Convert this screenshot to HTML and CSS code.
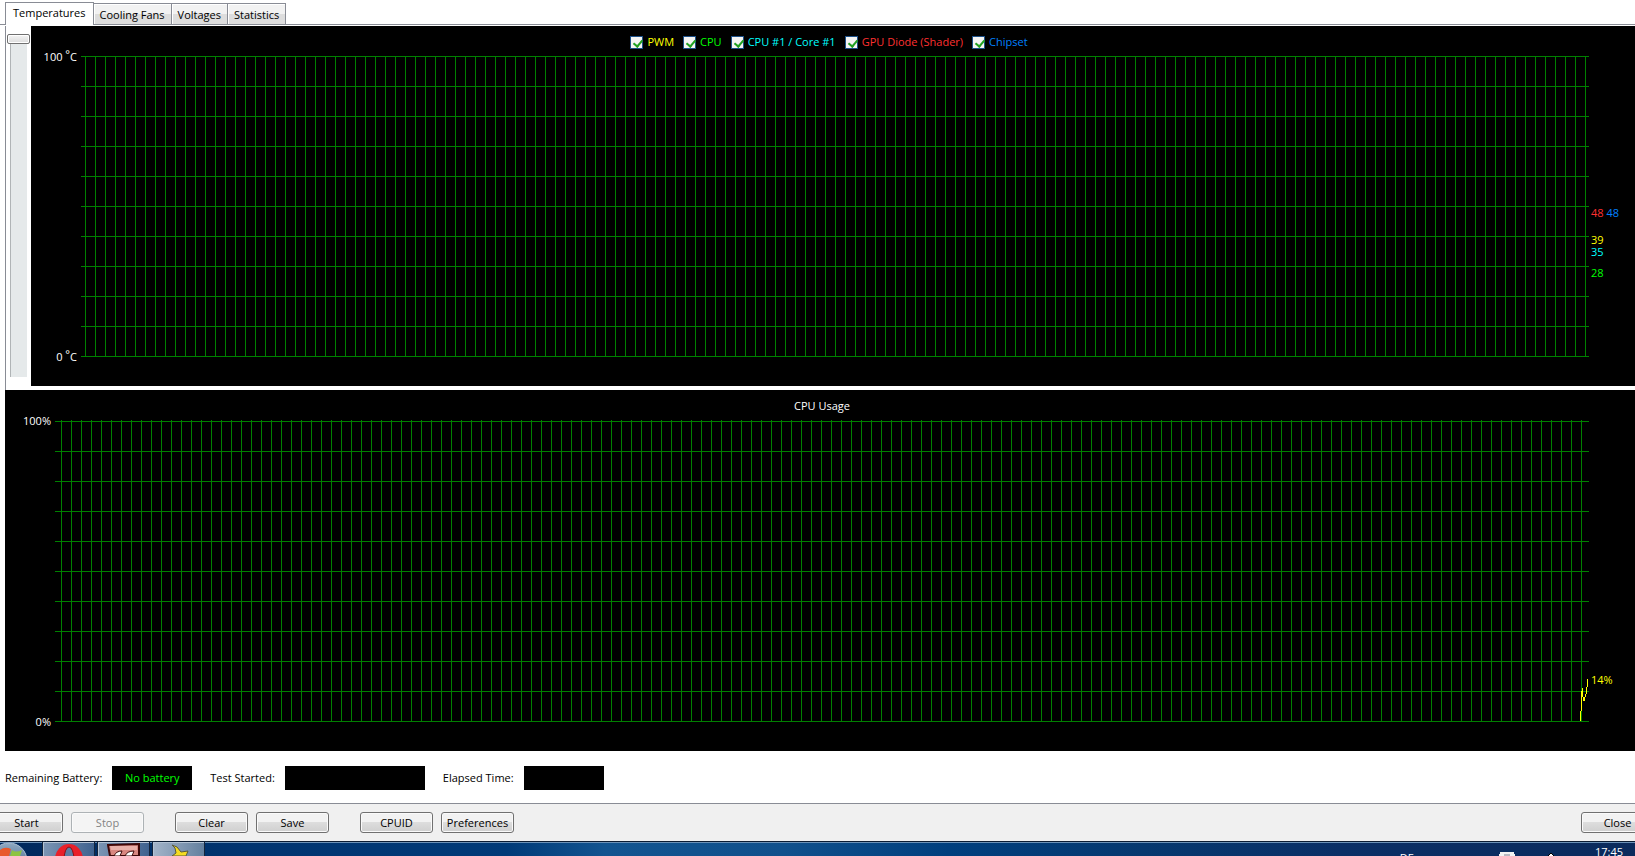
FILE: index.html
```
<!DOCTYPE html>
<html lang="en">
<head>
  <meta charset="UTF-8" />
  <meta name="viewport" content="width=device-width, initial-scale=1" />
  <title>System Stability Test</title>
  <link rel="stylesheet" href="styles.css">
</head>
<body>
  <nav class="tabs">
    <button class="tab active">Temperatures</button>
    <button class="tab">Cooling Fans</button>
    <button class="tab">Voltages</button>
    <button class="tab">Statistics</button>
  </nav>

  <main class="panel">
    <div class="temp-row">
      <div class="slider-box">
        <input type="range" class="slider" min="0" max="100" value="100" aria-label="Scale">
      </div>
      <section class="chart temp-chart">
        <div class="legend">
          <label class="yellow"><input type="checkbox" checked>PWM</label>
          <label class="green"><input type="checkbox" checked>CPU</label>
          <label class="cyan"><input type="checkbox" checked>CPU #1 / Core #1</label>
          <label class="red"><input type="checkbox" checked>GPU Diode (Shader)</label>
          <label class="blue"><input type="checkbox" checked>Chipset</label>
        </div>
        <div class="plot">
          <div class="scale">
            <span>100 <span class="deg">°</span>C</span>
            <span>0 <span class="deg">°</span>C</span>
          </div>
          <div class="grid"></div>
          <div class="values">
            <span class="value" style="bottom: 48%"><span class="red">48</span> <span class="blue">48</span></span>
            <span class="value yellow" style="bottom: 39%">39</span>
            <span class="value cyan" style="bottom: 35%">35</span>
            <span class="value green" style="bottom: 28%">28</span>
          </div>
        </div>
      </section>
    </div>

    <section class="chart cpu-chart">
      <h2 class="chart-title">CPU Usage</h2>
      <div class="plot">
        <div class="scale">
          <span>100%</span>
          <span>0%</span>
        </div>
        <div class="grid">
          <svg class="usage-line" width="10" height="301" viewBox="0 0 10 301" shape-rendering="crispEdges">
            <path d="M1 300 V292 L2 290 V272 L3 270 V267 L4 276 L5 280 L6 276 L7 273 L8 266 L9 258" fill="none" stroke="#ffff00" />
          </svg>
        </div>
        <div class="values">
          <span class="value yellow" style="bottom: 14%">14%</span>
        </div>
      </div>
    </section>

    <div class="status">
      <span>Remaining Battery:</span>
      <output class="field green">No battery</output>
      <span>Test Started:</span>
      <output class="field wide"></output>
      <span>Elapsed Time:</span>
      <output class="field"></output>
    </div>
  </main>

  <div class="actions">
    <div class="group">
      <button class="btn">Start</button>
      <button class="btn" disabled>Stop</button>
    </div>
    <div class="group">
      <button class="btn">Clear</button>
      <button class="btn">Save</button>
    </div>
    <div class="group">
      <button class="btn">CPUID</button>
      <button class="btn">Preferences</button>
    </div>
    <button class="btn close">Close</button>
  </div>

  <footer class="taskbar">
    <button class="orb" aria-label="Start menu">
      <svg width="42" height="14" viewBox="0 0 42 14">
        <defs>
          <linearGradient id="orb" x1="0" y1="0" x2="0" y2="1">
            <stop offset="0" stop-color="#8fa9c2" />
            <stop offset="1" stop-color="#2d5278" />
          </linearGradient>
        </defs>
        <circle cx="9" cy="19" r="18" fill="url(#orb)" stroke="#a9bdd0" />
        <path d="M0 8 Q5 4 11 7 L9 14 H0 Z" fill="#e8592b" />
        <path d="M12 8 Q16 11 22 8 L20 14 H10 Z" fill="#8cc43f" />
      </svg>
    </button>
    <button class="task" aria-label="Opera">
      <svg width="30" height="14" viewBox="0 0 30 14">
        <ellipse cx="15" cy="17" rx="14" ry="15" fill="#e8202a" />
        <ellipse cx="15" cy="18" rx="5" ry="13" fill="#5c7da3" stroke="#8d0d14" />
      </svg>
    </button>
    <button class="task" aria-label="Monitor">
      <svg width="34" height="14" viewBox="0 0 34 14">
        <path d="M1 3 L32 2 V14 H3 Z" fill="#d98780" stroke="#3c0808" stroke-width="2" />
        <path d="M3 4 H30 V8 H4 Z" fill="#e9b0a9" />
        <path d="M7 14 Q9 9 15 9 L13 14 Z M18 14 Q20 9 27 9 L25 14 Z" fill="#fff" stroke="#3c0808" />
      </svg>
    </button>
    <button class="task light" aria-label="Stability test">
      <svg width="28" height="14" viewBox="0 0 28 14">
        <path d="M7 3 L12 5 L16 10 L23 9 L21 14 H7 L11 11 L10 6 Z" fill="#f5dc22" stroke="#5a5a3c" />
      </svg>
    </button>
    <div class="tray">
      <span class="lang">DE</span>
      <svg class="flag" width="16" height="6" viewBox="0 0 16 6">
        <path d="M0 3 H1 V1 H15 V3 H16 V6 H0 Z" fill="#f2f2f2" />
        <path d="M5 3 H11 V6 H5 Z" fill="#b7b7c0" />
      </svg>
      <svg class="sound" width="8" height="6" viewBox="0 0 8 6">
        <path d="M4 2 L7 5 V6 H1 V5 Z" fill="#fff" stroke="#000" />
      </svg>
      <span class="clock">17:45</span>
    </div>
  </footer>
</body>
</html>
```
FILE: styles.css
```
* {
  box-sizing: border-box;
}

html {
  height: 100%;
}

body {
  margin: 0;
  min-height: 100%;
  display: flex;
  flex-direction: column;
  overflow: hidden;
  background: #fff;
  color: #000;
  font-family: "Open Sans", "Noto Sans", sans-serif;
  font-size: 11px;
  line-height: 16px;
}

button {
  font: inherit;
  color: inherit;
}

.yellow { color: #ffff00; }
.green { color: #00ff00; }
.cyan { color: #00ffff; }
.red { color: #ff3030; }
.blue { color: #0080ff; }

/* Tabs */
.tabs {
  display: flex;
  align-items: flex-end;
  height: 25px;
  padding-left: 5px;
  border-bottom: 1px solid #898c95;
}

.tab {
  height: 21px;
  padding: 1px 6px 0;
  border: 1px solid #898c95;
  border-left-width: 0;
  border-bottom: 0;
  background: linear-gradient(#f2f2f2 0 50%, #dddddd 50% 100%);
  box-shadow: inset 1px 1px 0 #fff;
}

.tab.active {
  height: 23px;
  margin-bottom: -1px;
  padding: 0 7px 2px;
  border-left-width: 1px;
  background: #fff;
}

/* Charts */
.panel {
  display: flex;
  flex-direction: column;
  gap: 4px;
  padding: 1px 0 13px;
  margin-left: 5px;
}

.temp-row {
  display: flex;
  border-left: 1px solid #898c95;
  margin-bottom: -4px;
  padding-bottom: 4px;
}

.slider-box {
  display: flex;
  justify-content: center;
  width: 25px;
  padding: 8px 0 9px;
}

.slider {
  appearance: none;
  writing-mode: vertical-lr;
  direction: rtl;
  width: 23px;
  margin: 0;
  background: linear-gradient(90deg, transparent 3px, #b0b4b6 3px 4px, #e5e9ea 4px 20px, transparent 20px);
}

.slider::-webkit-slider-thumb {
  appearance: none;
  width: 23px;
  height: 10px;
  border: 1px solid #707070;
  border-radius: 2px;
  background: linear-gradient(#f4f4f4, #dcdcdc);
  box-shadow: inset 0 0 0 1px #fff;
}

.chart {
  flex: 1;
  background: #000;
  color: #fff;
}

.temp-chart {
  padding: 8px 0 29px;
}

.cpu-chart {
  padding: 8px 0 29px;
}

.legend {
  display: flex;
  justify-content: center;
  gap: 9px;
  height: 16px;
  margin: 0 8px 6px 0;
}

.legend label {
  display: flex;
  align-items: center;
  gap: 4px;
}

.legend input {
  appearance: none;
  width: 13px;
  height: 13px;
  margin: 0;
  border: 1px solid #1d5088;
  background: #f4f4f4;
}

.legend input:checked::before {
  content: "";
  display: block;
  width: 4px;
  height: 7px;
  margin: 1px 0 0 4px;
  border: solid #21a121;
  border-width: 0 2px 2px 0;
  transform: rotate(40deg);
}

.chart-title {
  margin: 0 0 6px;
  padding-left: 4px;
  text-align: center;
  font-size: 11px;
  font-weight: normal;
}

.plot {
  display: flex;
}

.scale {
  display: flex;
  flex-direction: column;
  justify-content: space-between;
  width: 50px;
  margin: -7px 0 -8px;
  padding-right: 4px;
  text-align: right;
}

.deg {
  position: relative;
  top: -3px;
}

.grid {
  flex: 1;
  height: 301px;
  background-image:
    linear-gradient(90deg, #008000 1px, transparent 1px),
    linear-gradient(#008000 1px, transparent 1px);
  background-size: 10px 100%, 100% 30px;
  background-position: 4px 0, 0 0;
}

.cpu-chart .grid {
  position: relative;
  height: 302px;
  background-position: 6px 0, 0 1px;
}

.usage-line {
  position: absolute;
  right: 0;
  bottom: 0;
}

.values {
  position: relative;
  width: 46px;
}

.value {
  position: absolute;
  left: 2px;
  margin-bottom: -8px;
}

/* Status line */
.status {
  display: flex;
  align-items: center;
  margin-top: 11px;
  white-space: nowrap;
}

.field {
  width: 80px;
  height: 24px;
  margin: 0 18px 0 10px;
  background: #000;
  text-align: center;
  line-height: 24px;
}

.field.wide {
  width: 140px;
}

/* Bottom buttons */
.actions {
  display: flex;
  gap: 31px;
  height: 38px;
  padding-top: 8px;
  border-top: 1px solid #898c95;
  background: #f0f0f0;
}

.group {
  display: flex;
  gap: 8px;
}

.group:first-child {
  margin-left: -10px;
}

.btn {
  width: 73px;
  height: 21px;
  padding: 0;
  border: 1px solid #707070;
  border-radius: 3px;
  background: linear-gradient(#f2f2f2 0 50%, #dddddd 50%, #cfcfcf);
  box-shadow: inset 0 0 0 1px #fafafa;
  line-height: 18px;
}

.btn:disabled {
  border-color: #adb2b5;
  background: #f4f4f4;
  color: #838383;
}

.btn.close {
  margin: 0 -19px 0 auto;
}

/* Taskbar */
.taskbar {
  display: flex;
  height: 15px;
  overflow: hidden;
  border-top: 1px solid #0b1c33;
  background: linear-gradient(90deg, #00285c, #003470 15%, #003a78 31%, #125490 37%, #10508c 48%, #003f7e 58%, #06386f 70%, #0a2f66 82%, #0a2a5c);
  box-shadow: inset 0 2px 0 -1px #6c92b8;
}

.orb {
  width: 42px;
  padding: 0;
  border: 0;
  background: none;
}

.orb svg,
.task svg {
  display: block;
  margin: 0 auto;
}

.task {
  width: 53px;
  margin-right: 2px;
  padding: 0;
  border: 1px solid #14253c;
  border-width: 0 1px;
  background: linear-gradient(90deg, #7b95b4, #3f628f);
  box-shadow: inset 1px 1px 0 #b3c3d5;
}

.task.light {
  background: linear-gradient(90deg, #a3b4c9, #64809f);
}

.tray {
  display: flex;
  margin-left: auto;
  padding-right: 12px;
  color: #fff;
}

.lang {
  margin: 8px 85px 0 0;
}

.flag {
  margin: 9px 32px 0 0;
}

.sound {
  margin: 9px 40px 0 0;
}

.clock {
  margin-top: 2px;
}
```
